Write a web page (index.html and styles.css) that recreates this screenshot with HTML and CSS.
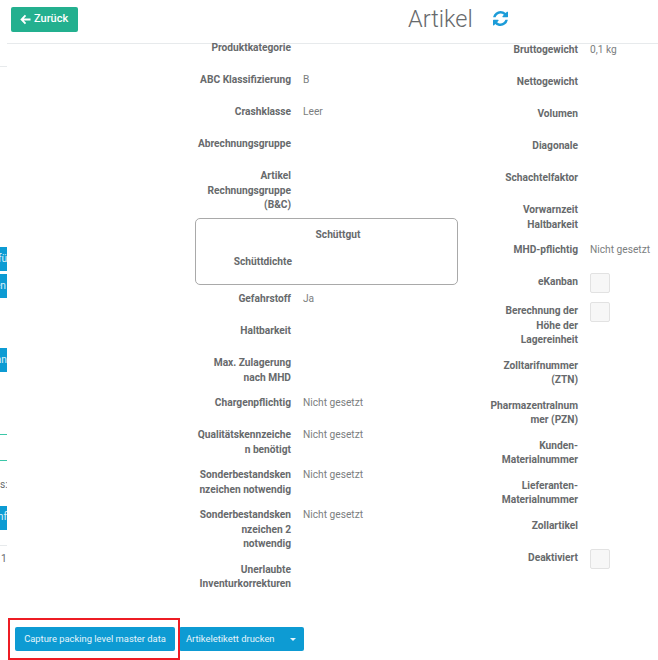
FILE: index.html
```html
<!DOCTYPE html>
<html lang="de">
<head>
<meta charset="utf-8">
<title>Artikel</title>
<link rel="stylesheet" href="styles.css">
</head>
<body>
<div class="page">
  <aside class="sidebar">
    <div class="side-line side-line--a"></div>
    <div class="side-btn side-btn--first">fü</div>
    <div class="side-btn side-btn--second">en</div>
    <div class="side-btn side-btn--third">an</div>
    <div class="side-line side-line--teal1"></div>
    <div class="side-line side-line--teal2"></div>
    <div class="side-text side-text--s">s:</div>
    <div class="side-btn side-btn--fourth">nf</div>
    <div class="side-line side-line--b"></div>
    <div class="side-text side-text--one">1</div>
  </aside>
  <main class="main">
    <header class="topbar">
      <a class="back-btn"><svg class="back-icon" viewBox="0 0 12 12"><path d="M6 1.500 1.700 6 6 10.500M2 6h9.500"/></svg>Zurück</a>
      <h1 class="title">Artikel</h1>
      <svg class="refresh" viewBox="0 0 1536 1536"><path d="M1511 928q0 5-1 7-64 268-268 434.500t-478 166.500q-146 0-282.500-55t-243.500-157l-129 129q-19 19-45 19t-45-19-19-45v-448q0-26 19-45t45-19h448q26 0 45 19t19 45-19 45l-137 137q71 66 161 102t187 36q134 0 250-65t186-179q11-17 53-117 8-23 30-23h192q13 0 22.500 9.500t9.500 22.500zm25-800v448q0 26-19 45t-45 19h-448q-26 0-45-19t-19-45 19-45l138-138q-148-137-349-137-134 0-250 65t-186 179q-11 17-53 117-8 23-30 23h-199q-13 0-22.500-9.500t-9.500-22.500v-7q65-268 270-434.500t480-166.500q146 0 284 55.500t245 156.500l130-129q19-19 45-19t45 19 19 45z"/></svg>
    </header>
    <div class="columns">
      <section class="col col--left">
        <div class="row"><div class="label">Produktkategorie</div><div class="value"></div></div>
        <div class="row"><div class="label">ABC Klassifizierung</div><div class="value">B</div></div>
        <div class="row"><div class="label">Crashklasse</div><div class="value">Leer</div></div>
        <div class="row"><div class="label">Abrechnungsgruppe</div><div class="value"></div></div>
        <div class="row row--before-box"><div class="label">Artikel Rechnungsgruppe (B&amp;C)</div><div class="value"></div></div>
        <div class="box">
          <div class="box-title">Schüttgut</div>
          <div class="row row--box"><div class="label">Schüttdichte</div><div class="value"></div></div>
        </div>
        <div class="row"><div class="label">Gefahrstoff</div><div class="value">Ja</div></div>
        <div class="row"><div class="label">Haltbarkeit</div><div class="value"></div></div>
        <div class="row"><div class="label">Max. Zulagerung nach MHD</div><div class="value"></div></div>
        <div class="row"><div class="label">Chargenpflichtig</div><div class="value">Nicht gesetzt</div></div>
        <div class="row"><div class="label">Qualitätskennzeichen benötigt</div><div class="value">Nicht gesetzt</div></div>
        <div class="row"><div class="label">Sonderbestandskennzeichen notwendig</div><div class="value">Nicht gesetzt</div></div>
        <div class="row"><div class="label">Sonderbestandskennzeichen 2 notwendig</div><div class="value">Nicht gesetzt</div></div>
        <div class="row"><div class="label">Unerlaubte Inventurkorrekturen</div><div class="value"></div></div>
      </section>
      <section class="col col--right">
        <div class="row"><div class="label">Bruttogewicht</div><div class="value">0,1 kg</div></div>
        <div class="row"><div class="label">Nettogewicht</div><div class="value"></div></div>
        <div class="row"><div class="label">Volumen</div><div class="value"></div></div>
        <div class="row"><div class="label">Diagonale</div><div class="value"></div></div>
        <div class="row"><div class="label">Schachtelfaktor</div><div class="value"></div></div>
        <div class="row"><div class="label">Vorwarnzeit Haltbarkeit</div><div class="value"></div></div>
        <div class="row"><div class="label">MHD-pflichtig</div><div class="value">Nicht gesetzt</div></div>
        <div class="row row--tight"><div class="label">eKanban</div><div class="value"><span class="check"></span></div></div>
        <div class="row"><div class="label">Berechnung der Höhe der Lagereinheit</div><div class="value"><span class="check"></span></div></div>
        <div class="row"><div class="label">Zolltarifnummer (ZTN)</div><div class="value"></div></div>
        <div class="row"><div class="label">Pharmazentralnummer (PZN)</div><div class="value"></div></div>
        <div class="row"><div class="label">Kunden-Materialnummer</div><div class="value"></div></div>
        <div class="row"><div class="label">Lieferanten-Materialnummer</div><div class="value"></div></div>
        <div class="row"><div class="label">Zollartikel</div><div class="value"></div></div>
        <div class="row"><div class="label">Deaktiviert</div><div class="value"><span class="check"></span></div></div>
      </section>
    </div>
    <footer class="actions">
      <button class="btn btn--capture">Capture packing level master data</button>
      <button class="btn btn--split">Artikeletikett drucken<span class="caret"></span></button>
      <div class="highlight"></div>
    </footer>
  </main>
</div>
</body>
</html>
```
FILE: styles.css
```css
* { box-sizing: border-box; }
html, body { margin: 0; padding: 0; background: #fff; }
body {
  font-family: Roboto, "Open Sans", "Liberation Sans", sans-serif;
  font-size: 10.2px;
  line-height: 14.5px;
  color: #676a6c;
}
.page { display: flex; width: 658px; height: 660px; overflow: hidden; }

/* clipped sidebar */
.sidebar { width: 7px; flex: none; overflow: hidden; display: flex; flex-direction: column; align-items: flex-end; }
.side-btn {
  flex: none; width: 40px; height: 24px; background: #0d9bd3; color: #dff2fa;
  display: flex; align-items: center; justify-content: flex-end; white-space: nowrap;
}
.side-btn--first { margin-top: 180px; justify-content: flex-start; padding-left: 31px; }
.side-btn--second { margin-top: 3px; padding-right: 1px; }
.side-btn--third { margin-top: 50px; }
.side-btn--fourth { margin-top: 14px; }
.side-line { flex: none; width: 7px; height: 1px; background: #e7eaec; }
.side-line--a { margin-top: 66px; }
.side-line--teal1 { margin-top: 62px; background: #3cc7a8; }
.side-line--teal2 { margin-top: 25px; background: #3cc7a8; }
.side-line--b { margin-top: 15px; }
.side-text { flex: none; width: 7px; color: #676a6c; white-space: nowrap; }
.side-text--s { margin-top: 17px; margin-bottom: -1px; }
.side-text--one { margin-top: 6px; padding-left: 1px; }

.main { flex: 1; min-width: 0; display: flex; flex-direction: column; position: relative; }

/* header */
.topbar { flex: none; height: 44px; border-bottom: 1px solid #e7eaec; display: flex; align-items: flex-start; }
.back-btn {
  display: flex; align-items: center; gap: 3px; width: 67px; height: 25px; margin: 7px 0 0 4px; padding-left: 9px;
  background: #23b08f; border-radius: 2px; color: #fff; font-size: 11px; font-weight: 500;
}
.back-icon { width: 11px; height: 11px; fill: none; stroke: #fff; stroke-width: 2; }
.title { margin: 4px 0 0 330px; font-size: 23.500px; line-height: 30px; font-weight: 300; color: #676a6c; }
.refresh { width: 15px; height: 15px; margin: 11px 0 0 20px; fill: #1c9cd8; }

/* columns */
.columns { flex: none; display: flex; height: 575px; margin-top: -3px; }
.col--left { width: 263px; margin-left: 188px; }
.col--right { width: 165px; margin-left: 25px; padding-top: 2.400px; }
.row { display: flex; min-height: 21px; margin-bottom: 11px; }
.col--left > .row { padding-left: 1px; }
.row--before-box { margin-bottom: 5.500px; }
.row--tight { min-height: 17px; }
.label { width: 95px; flex: none; text-align: right; font-weight: 700; overflow-wrap: break-word; }
.value { margin-left: 12px; white-space: nowrap; color: #7b7e80; }
.check {
  display: block; width: 20px; height: 20px; margin-top: -2px;
  background: #f7f7f7; border: 1px solid #e2e2e2; border-radius: 2px;
}

/* bulk box */
.box { height: 67px; margin-bottom: 7px; padding-top: 9px; border: 1px solid #a9a9a9; border-radius: 5px; }
.box-title { padding-left: 23px; text-align: center; font-weight: 700; margin-bottom: 12px; }
.row--box { padding-left: 1px; margin: 0; }

/* footer */
.actions { flex: none; display: flex; gap: 4px; padding-left: 8px; margin-top: 11px; position: relative; }
.btn {
  flex: none; height: 24px; padding: 0; border: 0; border-radius: 2px; background: #0d9bd3; color: #e6f5fb;
  font: 400 9.400px/24px Roboto, sans-serif; white-space: nowrap;
}
.btn--capture { width: 160px; }
.btn--split { width: 125px; padding-left: 7px; display: flex; align-items: center; }
.caret { margin-left: 15px; border-top: 3px solid #e6f5fb; border-left: 3px solid transparent; border-right: 3px solid transparent; }
.highlight { position: absolute; left: 1px; top: -9px; width: 172px; height: 42px; border: 2px solid #ed1c24; pointer-events: none; }
```
